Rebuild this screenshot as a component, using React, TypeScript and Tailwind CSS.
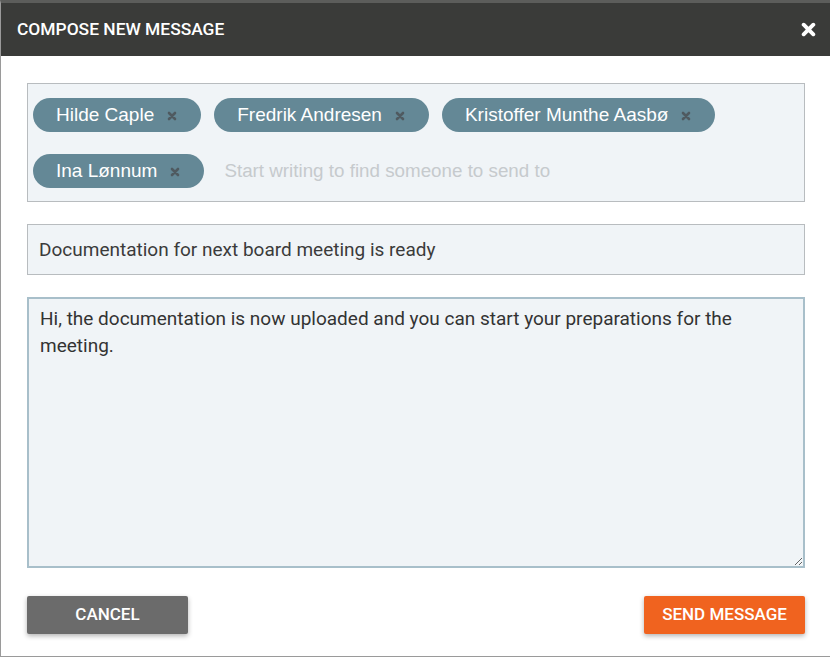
import React, { useState } from 'react';

const recipients = ['Hilde Caple', 'Fredrik Andresen', 'Kristoffer Munthe Aasbø', 'Ina Lønnum'];

const Chip: React.FC<{ name: string }> = ({ name }) => (
    <span className="flex items-center h-[34px] pl-[23px] pr-[24px] rounded-full bg-[#648896] text-white text-[19px] font-['Liberation_Sans',Arial,sans-serif]">
        {name}
        <svg className="ml-[13px] mt-[2px] w-[10px] h-[10px] text-[#4f5a60]" viewBox="0 0 10 10" fill="none" stroke="currentColor" strokeWidth="2.6" strokeLinecap="round">
            <path d="M2 2l6 6M8 2l-6 6" />
        </svg>
    </span>
);

const App: React.FC = () => {
    const [subject, setSubject] = useState('Documentation for next board meeting is ready');
    const [body, setBody] = useState('Hi, the documentation is now uploaded and you can start your preparations for the meeting.');

    return (
        <div className="w-[830px] h-[657px] bg-white font-['Roboto',sans-serif]">
            <div className="h-[657px] flex flex-col border-l border-b border-[#9a9a9a] border-t-[3px] border-t-[#5c5d5b]">
                <header className="h-[53px] shrink-0 bg-[#3a3b39] flex items-center justify-between pl-[16px] pr-[14px]">
                    <h2 className="text-white text-[17.4px] font-medium">COMPOSE NEW MESSAGE</h2>
                    <svg className="w-[15px] h-[15px] text-white" viewBox="0 0 14 14" fill="none" stroke="currentColor" strokeWidth="3.6" strokeLinecap="round">
                        <path d="M2.5 2.5l9 9M11.5 2.5l-9 9" />
                    </svg>
                </header>
                <main className="flex-1 flex flex-col pl-[26px] pr-[25px] pt-[27px] pb-[22px]">
                    <div className="h-[119px] border border-[#b8bcbf] bg-[#f0f4f7] px-[5px] pt-[14px] flex flex-wrap content-start gap-x-[13px] gap-y-[22px]">
                        {recipients.map((r) => (
                            <Chip key={r} name={r} />
                        ))}
                        <input
                            placeholder="Start writing to find someone to send to"
                            className="h-[34px] ml-[7px] w-[400px] bg-transparent outline-none text-[18.8px] font-['Liberation_Sans',Arial,sans-serif] placeholder-[#c6cacd]"
                        />
                    </div>
                    <input
                        value={subject}
                        onChange={(e) => setSubject(e.target.value)}
                        className="mt-[22px] h-[51px] w-full border border-[#b8bcbf] bg-[#f0f4f7] px-[11px] text-[19px] text-[#3b3b3b] outline-none"
                    />
                    <textarea
                        value={body}
                        onChange={(e) => setBody(e.target.value)}
                        className="mt-[22px] h-[271px] w-full border-2 border-[#a8bfca] bg-[#f0f4f7] px-[11px] pt-[6px] text-[19px] leading-[27px] text-[#333] outline-none resize-y"
                    />
                    <div className="mt-auto flex justify-between">
                        <button className="w-[161px] h-[38px] bg-[#6b6b6b] text-white text-[17px] font-medium rounded-[2px] shadow-[0_2px_5px_rgba(0,0,0,0.3)]">
                            CANCEL
                        </button>
                        <button className="w-[161px] h-[38px] bg-[#f0631f] text-white text-[17px] font-medium rounded-[2px] shadow-[0_2px_5px_rgba(0,0,0,0.3)]">
                            SEND MESSAGE
                        </button>
                    </div>
                </main>
            </div>
        </div>
    );
};

export default App;
